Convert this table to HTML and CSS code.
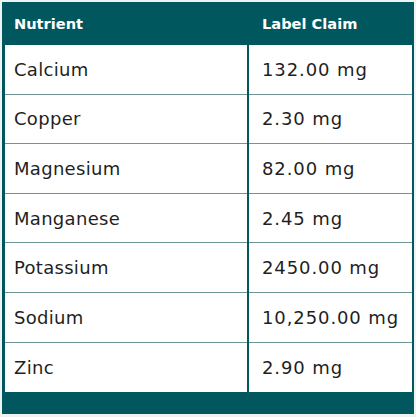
FILE: index.html
```html
<!DOCTYPE html>
<html lang="en">
<head>
<meta charset="utf-8">
<title>Nutrient table</title>
<link rel="stylesheet" href="styles.css">
</head>
<body>
<div class="wrap">
  <div class="head">
    <div class="hcell">Nutrient</div>
    <div class="hcell hcell-right">Label Claim</div>
  </div>
  <div class="body">
    <div class="row"><div class="cell">Calcium</div><div class="cell cell-right">132.00 mg</div></div>
    <div class="row"><div class="cell">Copper</div><div class="cell cell-right">2.30 mg</div></div>
    <div class="row"><div class="cell">Magnesium</div><div class="cell cell-right">82.00 mg</div></div>
    <div class="row"><div class="cell">Manganese</div><div class="cell cell-right">2.45 mg</div></div>
    <div class="row"><div class="cell">Potassium</div><div class="cell cell-right">2450.00 mg</div></div>
    <div class="row"><div class="cell">Sodium</div><div class="cell cell-right">10,250.00 mg</div></div>
    <div class="row row-last"><div class="cell">Zinc</div><div class="cell cell-right">2.90 mg</div></div>
  </div>
  <div class="foot"></div>
</div>
</body>
</html>
```
FILE: styles.css
```css
html, body {
  margin: 0;
  padding: 0;
  background: #eef3f3;
}
body {
  font-family: "DejaVu Sans", Inter, Arial, sans-serif;
  color: #1f1f1f;
}
.wrap {
  box-sizing: border-box;
  margin: 2px;
  width: 412px;
  height: 412px;
  background: #00585e;
  padding: 0 2px 0 3px;
  display: flex;
  flex-direction: column;
}
.head {
  height: 43px;
  display: grid;
  grid-template-columns: 242px 1fr;
  column-gap: 2px;
  flex: none;
}
.hcell {
  color: #ffffff;
  font-weight: 700;
  font-size: 14.6px;
  display: flex;
  align-items: center;
  padding-left: 9px;
}
.hcell-right {
  padding-left: 13px;
}
.body {
  display: flex;
  flex-direction: column;
  flex: none;
}
.row {
  height: 49.6px;
  display: grid;
  grid-template-columns: 242px 1fr;
  column-gap: 2px;
}
.cell {
  background: #ffffff;
  border-bottom: 1px solid #6f9597;
  display: flex;
  align-items: center;
  padding-left: 9px;
  font-size: 18px;
  letter-spacing: 0.3px;
}
.row-last .cell {
  border-bottom: none;
}
.cell-right {
  padding-left: 13px;
  letter-spacing: 0.9px;
}
.foot {
  flex: 1;
}
```
